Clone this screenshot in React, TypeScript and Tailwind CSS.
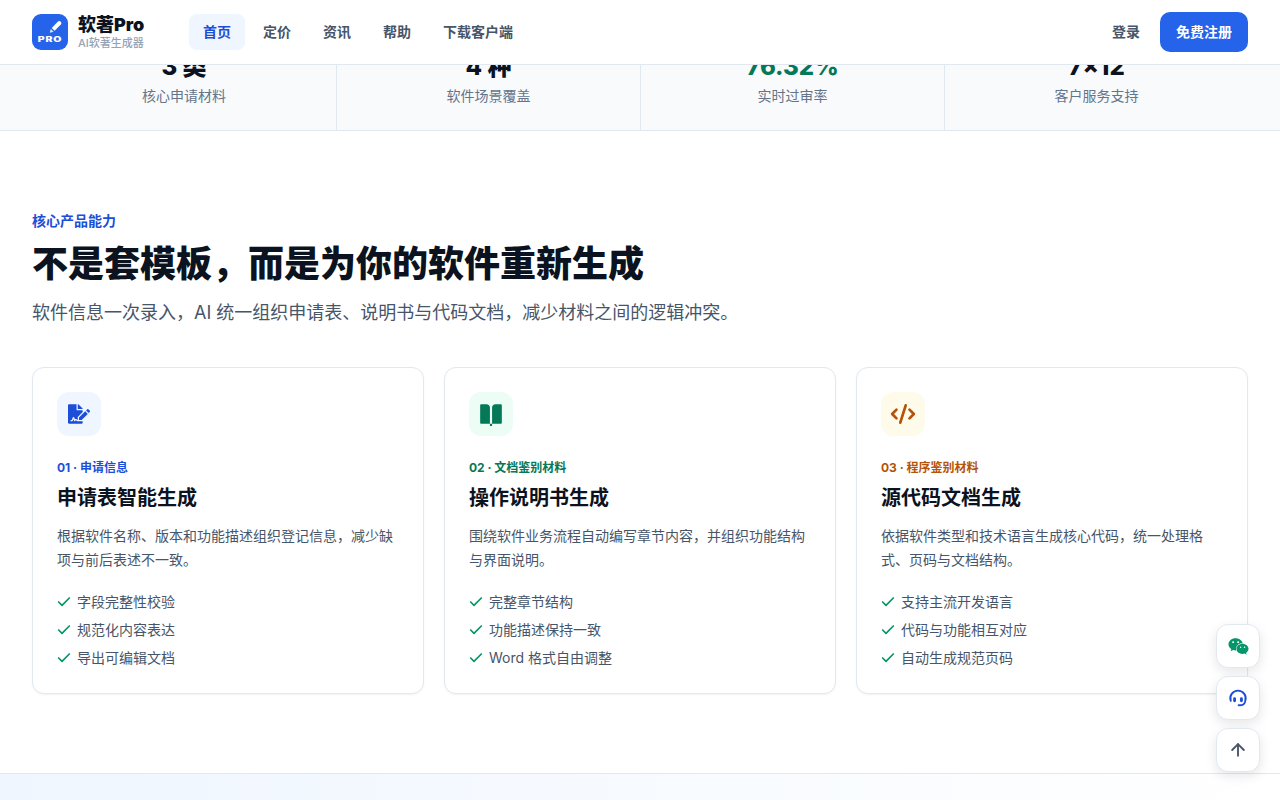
import { ArrowUp, Check, CodeXml } from "lucide-react";
import { FaFileSignature, FaWeixin } from "react-icons/fa";
import { RiBookOpenFill } from "react-icons/ri";
import type { ReactNode } from "react";

const navItems = ["首页", "定价", "资讯", "帮助", "下载客户端"];

const stats = [
  { value: "3 类", label: "核心申请材料", color: "text-[#0b1220]" },
  { value: "4 种", label: "软件场景覆盖", color: "text-[#0b1220]" },
  { value: "76.32%", label: "实时过审率", color: "text-[#047857]" },
  { value: "7×12", label: "客户服务支持", color: "text-[#0b1220]" },
];

interface Feature {
  icon: ReactNode;
  iconBg: string;
  tagColor: string;
  tag: string;
  title: string;
  desc: string;
  points: string[];
}

const features: Feature[] = [
  {
    icon: <FaFileSignature className="w-[22px] h-[22px] text-[#1d4ed8]" />,
    iconBg: "bg-[#eff6ff]",
    tagColor: "text-[#1d4ed8]",
    tag: "01 · 申请信息",
    title: "申请表智能生成",
    desc: "根据软件名称、版本和功能描述组织登记信息，减少缺项与前后表述不一致。",
    points: ["字段完整性校验", "规范化内容表达", "导出可编辑文档"],
  },
  {
    icon: <RiBookOpenFill className="w-[26px] h-[26px] text-[#047857]" />,
    iconBg: "bg-[#ecfdf5]",
    tagColor: "text-[#047857]",
    tag: "02 · 文档鉴别材料",
    title: "操作说明书生成",
    desc: "围绕软件业务流程自动编写章节内容，并组织功能结构与界面说明。",
    points: ["完整章节结构", "功能描述保持一致", "Word 格式自由调整"],
  },
  {
    icon: <CodeXml className="w-[26px] h-[26px] text-[#b45309]" strokeWidth={2.5} />,
    iconBg: "bg-[#fffbeb]",
    tagColor: "text-[#b45309]",
    tag: "03 · 程序鉴别材料",
    title: "源代码文档生成",
    desc: "依据软件类型和技术语言生成核心代码，统一处理格式、页码与文档结构。",
    points: ["支持主流开发语言", "代码与功能相互对应", "自动生成规范页码"],
  },
];

function Logo() {
  return (
    <div className="relative w-9 h-9 rounded-[9px] bg-[#2563eb] overflow-hidden">
      <svg viewBox="0 0 36 36" className="w-9 h-9 text-white" fill="currentColor">
        <path d="M26 7.6a1.8 1.8 0 0 1 2.5 0l.4.4a1.8 1.8 0 0 1 0 2.5L22.6 16.8l-2.9-2.9z" />
        <path d="M18.8 14.9l2.8 2.8-3.9 1.1z" opacity="0.85" />
      </svg>
      <span className="absolute left-0 right-0 top-[22px] text-center text-[7px] leading-[8px] font-black tracking-[0.6px] scale-x-[1.5] text-white">
        PRO
      </span>
    </div>
  );
}

function HeadsetIcon() {
  return (
    <svg viewBox="0 0 20 20" className="w-[22px] h-[22px] text-[#1d4ed8]" fill="none" stroke="currentColor" strokeWidth="1.7" strokeLinecap="round">
      <path d="M3.4 12.6A7 7 0 1 1 16.6 12.6" />
      <path d="M16.4 13.6c-.6 2-2.4 3-4.8 3" />
      <circle cx="10.6" cy="16.6" r="0.9" fill="currentColor" stroke="none" />
      <rect x="5.6" y="9.4" width="2.6" height="4.4" rx="1.3" fill="currentColor" stroke="none" />
      <rect x="11.8" y="9.4" width="2.6" height="4.4" rx="1.3" fill="currentColor" stroke="none" />
    </svg>
  );
}

function SideButton({ children }: { children: ReactNode }) {
  return (
    <button className="w-11 h-11 rounded-xl bg-white border border-[#e2e8f0] shadow-[0_4px_12px_rgba(15,23,42,0.1)] flex items-center justify-center">
      {children}
    </button>
  );
}

export default function App() {
  return (
    <div className="h-[800px] overflow-hidden bg-white font-['Inter','Noto_Sans_CJK_SC',sans-serif] text-[#0b1220]">
      <header className="relative z-10 h-[65px] bg-white/95 border-b border-[#e2e8f0] px-8 flex items-center">
        <div className="flex items-center gap-2.5 w-[157px]">
          <Logo />
          <div>
            <div className="text-lg leading-[22px] font-black">软著Pro</div>
            <div className="text-[11px] leading-[14px] font-medium text-[#94a3b8]">AI软著生成器</div>
          </div>
        </div>
        <nav className="flex items-center gap-1">
          {navItems.map((item, i) => (
            <a
              key={item}
              className={`h-9 px-3.5 rounded-lg flex items-center text-sm font-semibold ${
                i === 0 ? "bg-[#eff6ff] text-[#1d4ed8]" : "text-[#475569]"
              }`}
            >
              {item}
            </a>
          ))}
        </nav>
        <div className="ml-auto flex items-center gap-5">
          <a className="text-sm font-semibold text-[#475569]">登录</a>
          <button className="h-10 w-[88px] rounded-[10px] bg-[#2563eb] text-white text-sm font-bold">免费注册</button>
        </div>
      </header>

      {/* stats band, cut off by the header since the page is scrolled */}
      <section className="h-[65px] overflow-hidden bg-[#f8fafc] border-b border-[#e2e8f0] box-content">
        <div className="mx-8 grid grid-cols-4 h-[65px]">
          {stats.map((s, i) => (
            <div key={s.label} className={`text-center ${i > 0 ? "border-l border-[#e2e8f0]" : ""}`}>
              <div className="-mt-[16px] text-2xl leading-[36px] font-extrabold">
                <span className={s.color}>{s.value}</span>
              </div>
              <div className="text-sm leading-[22px] text-[#64748b]">{s.label}</div>
            </div>
          ))}
        </div>
      </section>

      <main className="px-8 pt-[80px]">
        <div className="text-sm leading-5 font-bold text-[#1d4ed8]">核心产品能力</div>
        <h2 className="mt-[8px] text-4xl leading-[50px] font-extrabold">不是套模板，而是为你的软件重新生成</h2>
        <p className="mt-[10px] text-lg leading-7 text-[#475569]">
          软件信息一次录入，AI 统一组织申请表、说明书与代码文档，减少材料之间的逻辑冲突。
        </p>

        <div className="mt-[40px] grid grid-cols-3 gap-5">
          {features.map((f) => (
            <div key={f.title} className="h-[327px] rounded-xl border border-[#e2e8f0] bg-white p-6 shadow-[0_1px_2px_rgba(15,23,42,0.05)]">
              <div className={`w-11 h-11 rounded-xl flex items-center justify-center ${f.iconBg}`}>{f.icon}</div>
              <div className={`mt-[23px] text-xs leading-[18px] font-bold ${f.tagColor}`}>{f.tag}</div>
              <h3 className="mt-[7px] text-xl leading-7 font-bold">{f.title}</h3>
              <p className="mt-[12px] text-sm leading-6 text-[#475569]">{f.desc}</p>
              <ul className="mt-[16px]">
                {f.points.map((p) => (
                  <li key={p} className="h-7 flex items-center gap-[5px] text-sm text-[#475569]">
                    <Check className="-ml-[1px] w-4 h-4 text-[#059669]" strokeWidth={2.5} />
                    {p}
                  </li>
                ))}
              </ul>
            </div>
          ))}
        </div>
      </main>

      <div className="mt-[79px] h-[40px] border-t border-[#e2e8f0] bg-gradient-to-r from-[#eff6ff] to-white" />

      <div className="fixed right-5 bottom-7 z-20 flex flex-col gap-2">
        <SideButton>
          <FaWeixin className="w-[21px] h-[21px] text-[#059669]" />
        </SideButton>
        <SideButton>
          <HeadsetIcon />
        </SideButton>
        <SideButton>
          <ArrowUp className="w-5 h-5 text-[#475569]" strokeWidth={2.25} />
        </SideButton>
      </div>
    </div>
  );
}
